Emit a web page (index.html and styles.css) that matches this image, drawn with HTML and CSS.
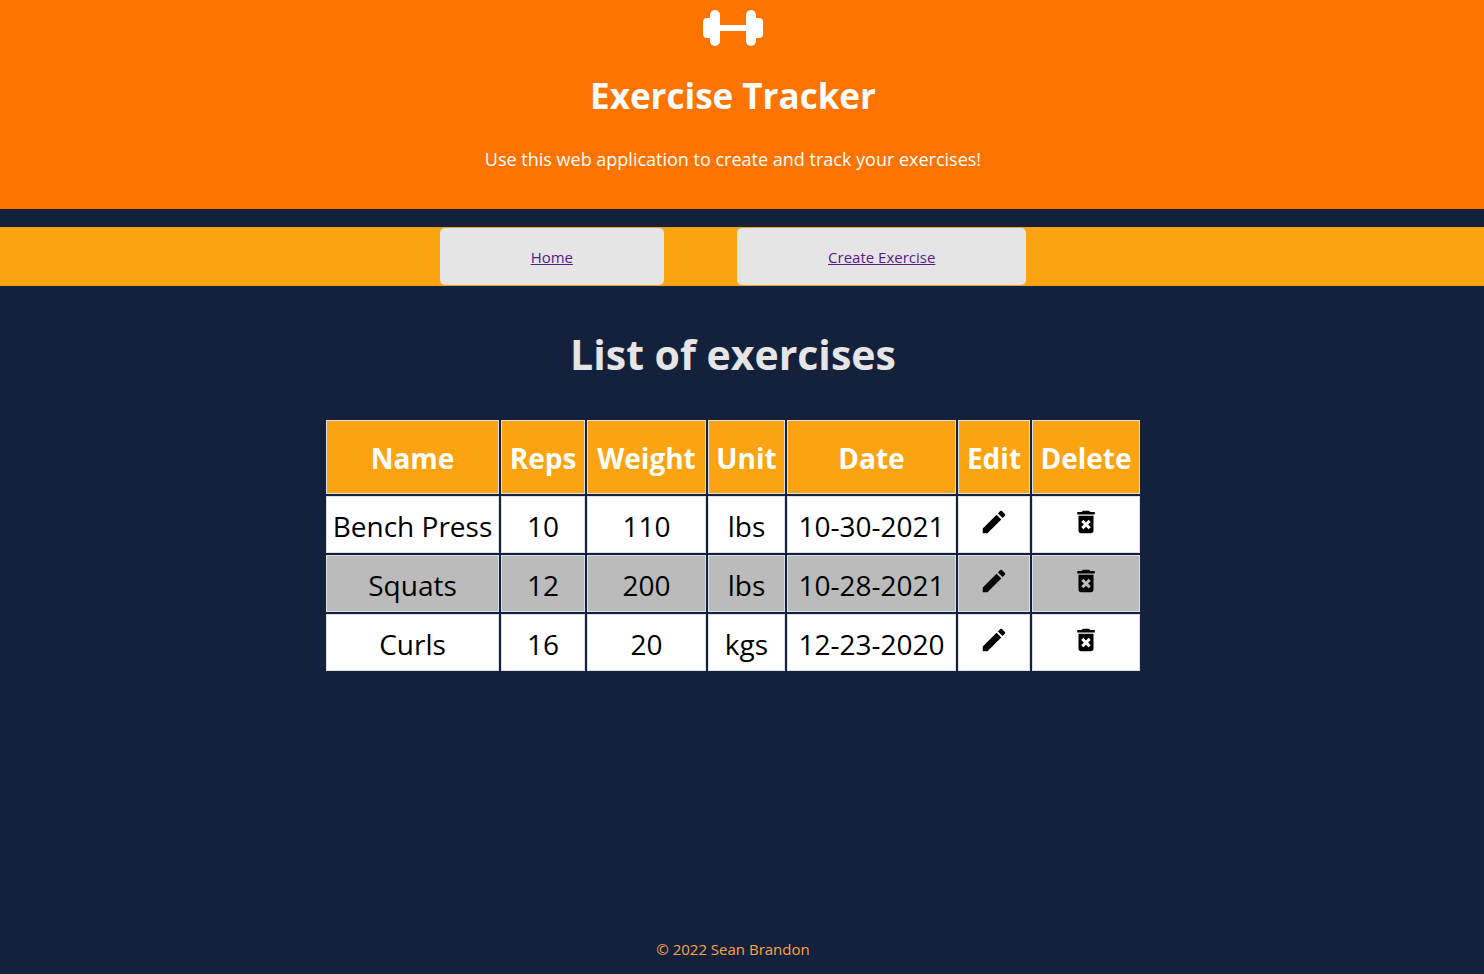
FILE: index.html
```html
<!DOCTYPE html>
<html lang="en">
<head>
<meta charset="utf-8">
<title>Exercise Tracker</title>
<link rel="stylesheet" href="styles.css">
</head>
<body>
<svg class="sprite" aria-hidden="true">
  <symbol id="pencil" viewBox="0 0 24 24"><path d="M3 17.25V21h3.75L17.81 9.94l-3.75-3.75L3 17.25zM20.71 7.04a1 1 0 0 0 0-1.41l-2.34-2.34a1 1 0 0 0-1.41 0l-1.83 1.83 3.75 3.75 1.83-1.83z"/></symbol>
  <symbol id="trash" viewBox="0 0 24 24"><path fill-rule="evenodd" d="M6 19c0 1.100.9 2 2 2h8c1.100 0 2-.9 2-2V7H6v12zm2.200-7.100 1.700-1.700L12 12.300l2.100-2.100 1.700 1.700L13.700 14l2.100 2.100-1.700 1.700L12 15.700l-2.100 2.100-1.700-1.700L10.300 14l-2.100-2.100zM15.500 4l-1-1h-5l-1 1H5v2h14V4z"/></symbol>
</svg>
<header class="header">
  <svg class="logo" viewBox="0 0 60 36" aria-hidden="true">
    <rect x="0" y="8" width="12" height="20" rx="4"/>
    <rect x="7" y="0" width="10" height="36" rx="5"/>
    <rect x="15" y="15" width="30" height="6"/>
    <rect x="43" y="0" width="10" height="36" rx="5"/>
    <rect x="48" y="8" width="12" height="20" rx="4"/>
  </svg>
  <h1 class="title">Exercise Tracker</h1>
  <p class="intro">Use this web application to create and track your exercises!</p>
</header>
<nav class="nav">
  <a class="nav-link" href="#">Home</a>
  <a class="nav-link" href="#">Create Exercise</a>
</nav>
<main class="main">
  <h2 class="heading">List of exercises</h2>
  <table class="exercises">
    <colgroup><col class="col-name"><col class="col-reps"><col class="col-weight"><col class="col-unit"><col class="col-date"><col class="col-edit"><col class="col-delete"></colgroup>
    <thead>
      <tr><th>Name</th><th>Reps</th><th>Weight</th><th>Unit</th><th>Date</th><th>Edit</th><th>Delete</th></tr>
    </thead>
    <tbody>
      <tr><td>Bench Press</td><td>10</td><td>110</td><td>lbs</td><td>10-30-2021</td>
        <td><button class="action" aria-label="Edit"><svg class="icon"><use href="#pencil"/></svg></button></td>
        <td><button class="action" aria-label="Delete"><svg class="icon"><use href="#trash"/></svg></button></td></tr>
      <tr><td>Squats</td><td>12</td><td>200</td><td>lbs</td><td>10-28-2021</td>
        <td><button class="action" aria-label="Edit"><svg class="icon"><use href="#pencil"/></svg></button></td>
        <td><button class="action" aria-label="Delete"><svg class="icon"><use href="#trash"/></svg></button></td></tr>
      <tr><td>Curls</td><td>16</td><td>20</td><td>kgs</td><td>12-23-2020</td>
        <td><button class="action" aria-label="Edit"><svg class="icon"><use href="#pencil"/></svg></button></td>
        <td><button class="action" aria-label="Delete"><svg class="icon"><use href="#trash"/></svg></button></td></tr>
    </tbody>
  </table>
</main>
<footer class="footer">© 2022 Sean Brandon</footer>
</body>
</html>
```
FILE: styles.css
```css
* { box-sizing: border-box; }
body {
  margin: 0;
  min-height: 100vh;
  display: flex;
  flex-direction: column;
  background: #14213d;
  font-family: "Open Sans", "Noto Sans", sans-serif;
  text-align: center;
}
.header, .nav, .main, .footer { padding-right: 18px; }
.sprite { display: none; }
.header {
  display: flex;
  flex-direction: column;
  align-items: center;
  padding-top: 10px;
  padding-bottom: 36px;
  background: #ff7400;
  color: #fff;
}
.logo { width: 60px; height: 36px; fill: #fff; }
.title { margin: 24px 0; font-size: 35px; line-height: 52px; font-weight: 700; }
.intro { margin: 0; padding: 1px 0; font-size: 18px; line-height: 25px; }
.nav {
  display: flex;
  justify-content: center;
  gap: 73px;
  margin-top: 18px;
  padding-top: 1px;
  padding-bottom: 1px;
  background: #fca311;
}
.nav-link {
  padding: 20px 91px 18px;
  border-radius: 5px;
  background: #e5e5e5;
  color: #551a8b;
  font-size: 15px;
  line-height: 19px;
}
.main { flex: 1; }
.heading {
  margin: 39px 0 35px;
  color: #e5e5e5;
  font-size: 41px;
  line-height: 58px;
  font-weight: 700;
}
.exercises {
  width: 818px;
  margin: 0 auto;
  table-layout: fixed;
  border-spacing: 2px;
}
.col-name { width: 173px; }
.col-reps { width: 84px; }
.col-weight { width: 119px; }
.col-unit { width: 77px; }
.col-date { width: 169px; }
.col-edit { width: 72px; }
.col-delete { width: 108px; }
th, td { padding: 0; border: 1px solid #dcdfe6; white-space: nowrap; }
th { height: 74px; padding-top: 2px; background: #fca311; color: #fff; font-size: 28px; font-weight: 700; line-height: 38px; }
td { height: 57px; background: #fff; color: #000; font-size: 28px; line-height: 38px; padding-top: 2px; }
tbody tr:nth-child(even) td { background: #bbb; }
.action {
  display: block;
  margin: 0 auto;
  padding: 0 0 8px;
  border: 0;
  background: none;
  cursor: pointer;
}
.icon { display: block; width: 30px; height: 30px; fill: #000; }
.footer { padding-bottom: 15px; color: #fca346; font-size: 15px; line-height: 20px; }
```
